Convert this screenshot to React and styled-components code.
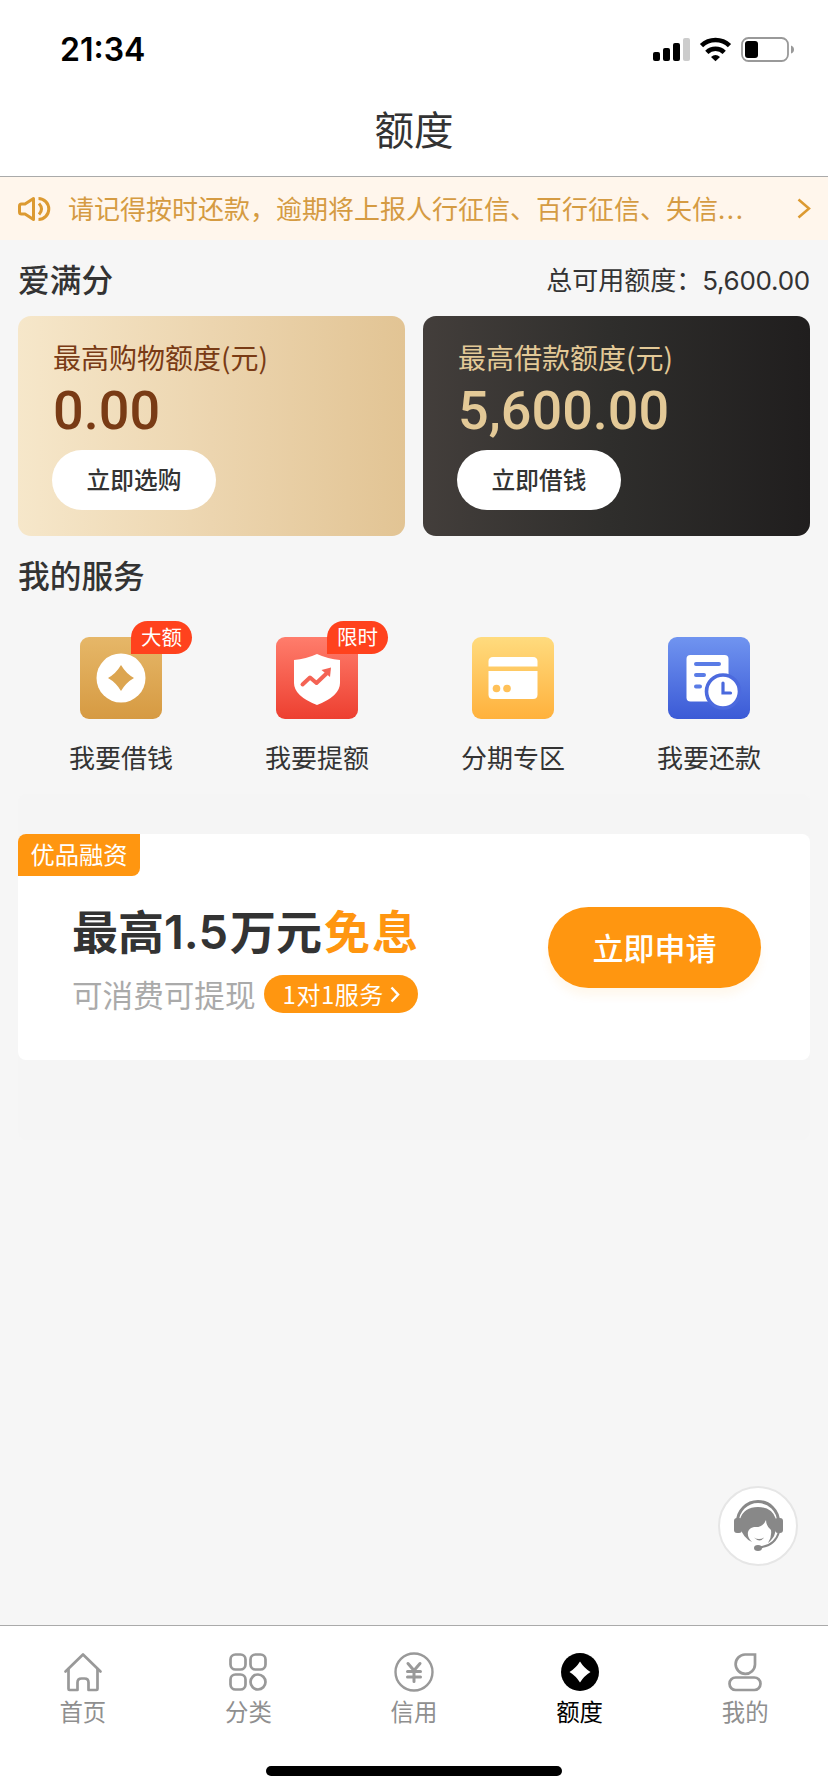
import React from "react";
import styled, { createGlobalStyle } from "styled-components";

const GlobalStyle = createGlobalStyle`
  * {
    box-sizing: border-box;
  }

  body {
    background: #f6f6f6;
    color: #333;
    font-family: "Noto Sans CJK SC", sans-serif;
    margin: 0;
  }
`;

const Page = styled.div`
  display: flex;
  flex-direction: column;
  height: 1792px;
  overflow: hidden;
  position: relative;
  width: 828px;
`;

const Header = styled.header`
  background: #fff;
  border-bottom: 1px solid #aaa;
  height: 177px;
`;

const StatusBar = styled.div`
  align-items: center;
  display: flex;
  height: 98px;
  justify-content: space-between;
  padding: 0 34px 0 60px;
`;

const Time = styled.span`
  color: #000;
  font-family: Inter, sans-serif;
  font-size: 32px;
  font-weight: 600;
  letter-spacing: 0;
`;

const StatusIcons = styled.svg`
  display: block;
  height: 26px;
  width: 142px;
`;

const PageTitle = styled.h1`
  color: #333;
  font-size: 39.5px;
  font-weight: 400;
  line-height: 59px;
  margin: 0;
  text-align: center;
`;

const Notice = styled.div`
  align-items: center;
  background: #fff6ec;
  color: #d59b42;
  display: flex;
  height: 63px;
  padding: 0 17px;
`;

const NoticeText = styled.p`
  flex: 1;
  font-size: 26px;
  line-height: 40px;
  margin: 0 0 2px 17px;
  white-space: nowrap;
`;

const Dots = styled.span`
  letter-spacing: 1.6px;
`;

const Main = styled.main`
  flex: 1;
  padding: 0 18px;
`;

const SectionHead = styled.div`
  align-items: center;
  display: flex;
  height: ${props => props.height}px;
  justify-content: space-between;
`;

const ServicesHead = styled(SectionHead)`
  padding-bottom: 8px;
`;

const SectionTitle = styled.h2`
  font-size: 31.7px;
  font-weight: 500;
  line-height: 44px;
  margin: 0;
`;

const Total = styled.span`
  font-size: 26px;
  line-height: 40px;
  padding-top: 4px;
`;

const TotalValue = styled.span`
  font-family: Inter, sans-serif;
  letter-spacing: -0.25px;
`;

const Cards = styled.div`
  display: grid;
  gap: 18px;
  grid-template-columns: 1fr 1fr;
`;

const Card = styled.section`
  background: ${props => props.$dark
    ? "linear-gradient(90deg, #433e3b, #2f2e2c 48%, #201e1e)"
    : "linear-gradient(90deg, #f6e7ca, #ecd5af 50%, #e2c494)"};
  border-radius: 13px;
  color: ${props => props.$dark ? "#e3c997" : "#793b15"};
  height: 220px;
  padding: 19px 0 0 35px;
`;

const CardLabel = styled.div`
  font-size: 28px;
  line-height: 44px;
`;

const CardValue = styled.div`
  font-family: Roboto, sans-serif;
  font-size: 54px;
  font-weight: 500;
  line-height: 64px;
  margin-bottom: 7px;
`;

const CardButton = styled.button`
  background: #fff;
  border: 0;
  border-radius: 30px;
  color: #333;
  display: block;
  font-family: inherit;
  font-size: 23.7px;
  font-weight: 500;
  height: 60px;
  margin-left: -1px;
  padding: 0 0 2px;
  width: 164px;
`;

const Services = styled.div`
  display: grid;
  grid-template-columns: repeat(4, 196px);
  padding: 18px 0 0 5px;
`;

const Service = styled.div`
  align-items: center;
  display: flex;
  flex-direction: column;
  font-size: 26px;
  line-height: 40px;
`;

const ServiceIcon = styled.div`
  height: 82px;
  margin-bottom: 18px;
  position: relative;
  width: 82px;

  svg {
    display: block;
  }
`;

const Badge = styled.span`
  background: #ff421d;
  border-radius: 17px 17px 17px 0;
  color: #fff;
  font-size: 20.5px;
  height: 33px;
  left: 51px;
  line-height: 31px;
  position: absolute;
  text-align: center;
  top: -16px;
  width: 61px;
`;

const BannerWrap = styled.div`
  background: #f5f5f5;
  border-radius: 8px;
  height: 346px;
  margin-top: 17px;
  padding-top: 40px;
`;

const Banner = styled.section`
  background: #fff;
  border-radius: 8px;
  display: flex;
  flex-direction: column;
  height: 226px;
`;

const BannerTag = styled.div`
  align-self: flex-start;
  background: #ff9610;
  border-radius: 8px 0 8px 0;
  color: #fff;
  font-size: 24.3px;
  height: 42px;
  line-height: 40px;
  text-align: center;
  width: 122px;
`;

const BannerBody = styled.div`
  display: flex;
  justify-content: space-between;
  padding: 23px 49px 0 54px;
`;

const BannerTitle = styled.div`
  align-items: baseline;
  display: flex;
  font-size: 46px;
  font-weight: 700;
  height: 66px;
  line-height: 60px;
`;

const Digits = styled.span`
  font-family: Inter, sans-serif;
  font-size: 47px;
  font-weight: 600;
  margin-right: 2px;
`;

const Free = styled.span`
  color: #ff9610;
  letter-spacing: 2px;
  margin-left: 2px;
`;

const BannerSub = styled.div`
  align-items: center;
  color: #aaa;
  display: flex;
  font-size: 30.6px;
  gap: 8px;
  height: 38px;
  line-height: 36px;
  margin-top: 10px;
  white-space: nowrap;
`;

const Pill = styled.span`
  align-items: center;
  background: #ff9610;
  border-radius: 19px;
  color: #fff;
  display: flex;
  font-size: 24px;
  gap: 6px;
  height: 38px;
  letter-spacing: 0.5px;
  padding-left: 19px;
  width: 154px;
`;

const ApplyButton = styled.button`
  background: #ff9610;
  border: 0;
  border-radius: 41px;
  box-shadow: 0 8px 10px rgba(255, 150, 16, 0.07);
  color: #fff;
  font-family: inherit;
  font-size: 31px;
  font-weight: 500;
  height: 81px;
  margin-top: 8px;
  padding: 0 0 3px;
  width: 213px;
`;

const Support = styled.div`
  background: #fff;
  border: 2px solid #e6e6e6;
  border-radius: 50%;
  height: 80px;
  left: 718px;
  position: absolute;
  top: 1486px;
  width: 80px;

  svg {
    display: block;
  }
`;

const TabBar = styled.nav`
  background: #fff;
  border-top: 1px solid #aaa;
  display: flex;
  flex-direction: column;
  height: 167px;
`;

const Tabs = styled.div`
  display: grid;
  grid-template-columns: repeat(5, 1fr);
  height: 140px;
  padding-top: 26px;
`;

const Tab = styled.div`
  align-items: center;
  color: ${props => props.$active ? "#000" : "#8f8f8f"};
  display: flex;
  flex-direction: column;
  font-size: 23.4px;
  line-height: 38px;

  svg {
    display: block;
  }
`;

const HomeIndicator = styled.div`
  align-self: center;
  background: #000;
  border-radius: 5px;
  height: 10px;
  width: 296px;
`;

const Signal = () => (
  <StatusIcons viewBox="652 36 142 26">
    <rect x="653" y="52" width="7" height="9" rx="2" />
    <rect x="663" y="48" width="7" height="13" rx="2" />
    <rect x="673" y="43" width="7" height="18" rx="2" />
    <rect x="683" y="38" width="7" height="23" rx="2" fill="#ccc" />
    <g fill="none" stroke="#000" strokeWidth="4.6">
      <path d="M701.5 45.7a20 20 0 0 1 28 0" />
      <path d="M706.8 52.3a12.5 12.5 0 0 1 17.4 0" />
    </g>
    <path d="M711 57q4.500-4 9 0l-4.500 4.200z" />
    <rect x="742" y="38" width="46" height="23" rx="6.500" fill="none" stroke="#999" strokeWidth="1.800" />
    <rect x="745" y="41" width="13" height="17" rx="3" />
    <path d="M791 45.500q3 1 3 4t-3 4z" fill="#999" />
  </StatusIcons>
);

const Speaker = () => (
  <svg width="34" height="26" viewBox="17 195 34 26" fill="none" stroke="#dc9a31" strokeWidth="3" strokeLinejoin="round">
    <path d="M33.500 197.500v21l-8.500-5.500h-3.500q-2 0-2-2v-6q0-2 2-2h3.500z" />
    <path d="M38.500 197.500a10.300 10.500 0 0 1 0 21" />
    <path d="M39 202.500q5 5.500 0 11" />
  </svg>
);

const Chevron = ({ width, height, stroke }) => (
  <svg width={width} height={height} viewBox={`0 0 ${width} ${height}`} fill="none" stroke={stroke} strokeWidth="2.500">
    <path d={`M1.500 1.500L${width - 2} ${height / 2}L1.500 ${height - 1.5}`} />
  </svg>
);

const Tile = ({ id, from, to, children }) => (
  <svg width="82" height="82" viewBox="0 0 82 82">
    <defs>
      <linearGradient id={id} x1="0" y1="0" x2="0" y2="1">
        <stop stopColor={from} />
        <stop offset="1" stopColor={to} />
      </linearGradient>
    </defs>
    <rect width="82" height="82" rx="9" fill={`url(#${id})`} />
    {children}
  </svg>
);

const LoanIcon = () => (
  <Tile id="loan" from="#e6b768" to="#d69a42">
    <circle cx="41" cy="41" r="24.500" fill="#fff" />
    <path d="M41 28q5 8.500 13 13q-8 4.500-13 13q-5-8.500-13-13q8-4.500 13-13z" fill="#dca550" />
  </Tile>
);

const RaiseIcon = () => (
  <Tile id="raise" from="#ff7d6c" to="#ed3f30">
    <path d="M41 17q11 5 23 6v23q0 13-23 22q-23-9-23-22v-23q12-1 23-6z" fill="#fff" />
    <path d="M26.500 47.500l7.500-7l6.500 5.500l10-9.500" fill="none" stroke="#f46354" strokeWidth="4" strokeLinecap="round" strokeLinejoin="round" />
    <path d="M45.500 33l9.500-2.500l-1 9.500z" fill="#f46354" />
  </Tile>
);

const InstalmentIcon = () => (
  <Tile id="instalment" from="#ffdb7e" to="#ffb13c">
    <path d="M16.500 29.500v-5q0-4.500 4.500-4.500h40q4.500 0 4.500 4.500v5z" fill="#fff" />
    <path d="M16.500 34h49v23.500q0 4.500-4.500 4.500h-40q-4.500 0-4.500-4.500z" fill="#fff" />
    <circle cx="24.500" cy="51.500" r="3.800" fill="#ffc159" />
    <circle cx="35" cy="51.500" r="3.800" fill="#ffc159" />
  </Tile>
);

const RepayIcon = () => (
  <Tile id="repay" from="#7094f0" to="#3b5ad6">
    <rect x="18.500" y="18" width="42" height="46.500" rx="4" fill="#fff" />
    <path d="M28 27h23M28 38h8M28 49.500h4" stroke="#5a7ce6" strokeWidth="4" strokeLinecap="round" />
    <circle cx="55" cy="54.500" r="16.500" fill="#fff" stroke="#4c6ade" strokeWidth="3.600" />
    <path d="M55 46v10h7.500" fill="none" stroke="#4a69dd" strokeWidth="3.200" strokeLinecap="round" />
  </Tile>
);

const SupportIcon = () => (
  <svg width="76" height="76" viewBox="720 1488 76 76">
    <path d="M737.500 1522a20.500 20.500 0 0 1 41 0" fill="none" stroke="#888" strokeWidth="3" />
    <path d="M740 1519q4-12 18-12q14 0 18 12l-1 14q-1 5-7 10q4-6 3-13q-5-4-5-10q-3 8-12 7q-5 1-6 5q-1 5 4 10q-9-4-12-15z" fill="#888" />
    <rect x="734" y="1518" width="8" height="15" rx="3" fill="#888" />
    <rect x="775" y="1518" width="8" height="15" rx="3" fill="#888" />
    <path d="M779 1532q-4 14-20 15.500" fill="none" stroke="#888" strokeWidth="2" />
    <path d="M754 1537.500q5 3 10 0q-4 6-10 0z" fill="#888" />
    <ellipse cx="758" cy="1548" rx="4" ry="3" fill="#888" />
  </svg>
);

const TabSvg = ({ children }) => (
  <svg width="40" height="40" viewBox="0 0 40 40" fill="none" stroke="#999" strokeWidth="2.700" strokeLinejoin="round" strokeLinecap="round">
    {children}
  </svg>
);

const HomeIcon = () => (
  <TabSvg>
    <path d="M2.500 19.500L20 2.500L37.500 19.500" />
    <path d="M5.500 17v20q0 1 1 1h8v-7.500q0-4 4-4h3q4 0 4 4v7.500h8q1 0 1-1v-20" />
  </TabSvg>
);

const CategoryIcon = () => (
  <TabSvg>
    <rect x="2.500" y="2.500" width="15" height="15" rx="5" />
    <rect x="22.500" y="2.500" width="15" height="15" rx="5" />
    <rect x="2.500" y="22.500" width="15" height="15" rx="5" />
    <circle cx="30" cy="30" r="7.500" />
  </TabSvg>
);

const CreditIcon = () => (
  <TabSvg>
    <circle cx="20" cy="20" r="18.500" strokeWidth="2.400" />
    <path d="M14 11.500l6 7l6-7M20 18.500v11M13.500 19.500h13M13.500 25h13" strokeWidth="3" />
  </TabSvg>
);

const QuotaIcon = () => (
  <TabSvg>
    <circle cx="20" cy="20" r="19" fill="#000" stroke="none" />
    <path d="M20 9.500q4 6.500 10.500 10.500q-6.500 4-10.500 10.500q-4-6.500-10.500-10.500q6.500-4 10.500-10.500z" fill="#fff" stroke="none" />
  </TabSvg>
);

const MineIcon = () => (
  <TabSvg>
    <path d="M30 2.500h-10a9.700 9.700 0 1 0 10 10z" strokeLinejoin="miter" />
    <rect x="4.500" y="25.500" width="31" height="12.500" rx="6.200" />
  </TabSvg>
);

const cards = [
  { label: "最高购物额度(元)", value: "0.00", action: "立即选购" },
  { label: "最高借款额度(元)", value: "5,600.00", action: "立即借钱", dark: true },
];

const services = [
  { name: "我要借钱", Icon: LoanIcon, badge: "大额" },
  { name: "我要提额", Icon: RaiseIcon, badge: "限时" },
  { name: "分期专区", Icon: InstalmentIcon },
  { name: "我要还款", Icon: RepayIcon },
];

const tabs = [
  { name: "首页", Icon: HomeIcon },
  { name: "分类", Icon: CategoryIcon },
  { name: "信用", Icon: CreditIcon },
  { name: "额度", Icon: QuotaIcon, active: true },
  { name: "我的", Icon: MineIcon },
];

const App = () => (
  <Page>
    <GlobalStyle />
    <Header>
      <StatusBar>
        <Time>21:34</Time>
        <Signal />
      </StatusBar>
      <PageTitle>额度</PageTitle>
    </Header>
    <Notice>
      <Speaker />
      <NoticeText>请记得按时还款，逾期将上报人行征信、百行征信、失信<Dots>...</Dots></NoticeText>
      <Chevron width={14} height={21} stroke="#dc9a31" />
    </Notice>
    <Main>
      <SectionHead height={76}>
        <SectionTitle>爱满分</SectionTitle>
        <Total>总可用额度：<TotalValue>5,600.00</TotalValue></Total>
      </SectionHead>
      <Cards>
        {cards.map(card => (
          <Card key={card.label} $dark={card.dark}>
            <CardLabel>{card.label}</CardLabel>
            <CardValue>{card.value}</CardValue>
            <CardButton>{card.action}</CardButton>
          </Card>
        ))}
      </Cards>
      <ServicesHead height={83}>
        <SectionTitle>我的服务</SectionTitle>
      </ServicesHead>
      <Services>
        {services.map(({ name, Icon, badge }) => (
          <Service key={name}>
            <ServiceIcon>
              <Icon />
              {badge ? <Badge>{badge}</Badge> : null}
            </ServiceIcon>
            {name}
          </Service>
        ))}
      </Services>
      <BannerWrap>
        <Banner>
          <BannerTag>优品融资</BannerTag>
          <BannerBody>
            <div>
              <BannerTitle>
                最高<Digits>1.5</Digits>万元<Free>免息</Free>
              </BannerTitle>
              <BannerSub>
                可消费可提现
                <Pill>
                  1对1服务
                  <Chevron width={10} height={17} stroke="#fff" />
                </Pill>
              </BannerSub>
            </div>
            <ApplyButton>立即申请</ApplyButton>
          </BannerBody>
        </Banner>
      </BannerWrap>
    </Main>
    <TabBar>
      <Tabs>
        {tabs.map(({ name, Icon, active }) => (
          <Tab key={name} $active={active}>
            <Icon />
            {name}
          </Tab>
        ))}
      </Tabs>
      <HomeIndicator />
    </TabBar>
    <Support>
      <SupportIcon />
    </Support>
  </Page>
);

export default App;
